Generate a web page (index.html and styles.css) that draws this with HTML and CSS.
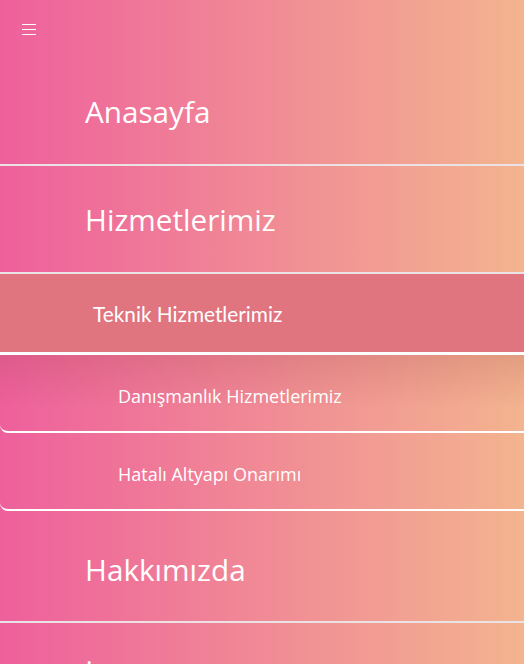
FILE: index.html
```html
<!DOCTYPE html>
<html lang="tr">
<head>
<meta charset="utf-8">
<title>Menü</title>
<link rel="stylesheet" href="styles.css">
</head>
<body>
<nav class="menu">
  <div class="menu-head">
    <button class="burger" aria-label="Menü">
      <span class="burger-line"></span>
      <span class="burger-line"></span>
      <span class="burger-line"></span>
    </button>
  </div>
  <a class="row main">Anasayfa</a>
  <a class="row main">Hizmetlerimiz</a>
  <a class="row sub active">Teknik Hizmetlerimiz</a>
  <a class="row sub2 shaded">Danışmanlık Hizmetlerimiz</a>
  <a class="row sub2">Hatalı Altyapı Onarımı</a>
  <a class="row main tall">Hakkımızda</a>
  <a class="row main">İletişim</a>
</nav>
</body>
</html>
```

FILE: styles.css
```css
html, body {
  margin: 0;
  padding: 0;
  height: 100%;
  overflow: hidden;
}

body {
  background: linear-gradient(to right, #ee609c 0%, #f3b48f 100%);
  color: #ffffff;
  font-family: "Open Sans", "Noto Sans", sans-serif;
}

.menu {
  display: flex;
  flex-direction: column;
}

.menu-head {
  height: 58px;
  box-sizing: border-box;
  padding: 24px 0 0 22px;
}

.burger {
  display: flex;
  flex-direction: column;
  gap: 4px;
  width: 14px;
  padding: 0;
  margin: 0;
  border: 0;
  background: none;
}

.burger-line {
  display: block;
  width: 14px;
  height: 1px;
  background: #ffffff;
}

.row {
  display: flex;
  align-items: center;
  box-sizing: border-box;
  color: #ffffff;
  text-decoration: none;
  flex-shrink: 0;
}

.main {
  height: 108px;
  padding-left: 85px;
  font-size: 29.7px;
  border-bottom: 2px solid #ebe2e6;
}

.main.tall {
  height: 112px;
  padding-top: 6px;
}

.sub {
  height: 81px;
  padding-left: 93px;
  font-family: "Lato", sans-serif;
  font-size: 20.8px;
  background: #e0747f;
  border-bottom: 3px solid #ffffff;
}

.sub2 {
  height: 78px;
  padding-left: 118px;
  padding-top: 6px;
  font-size: 18px;
  border-bottom: 2px solid #ffffff;
  border-bottom-left-radius: 8px;
}

.shaded {
  background: linear-gradient(to bottom, rgba(150, 60, 60, 0.18) 0%, rgba(150, 60, 60, 0) 70%);
}
```
